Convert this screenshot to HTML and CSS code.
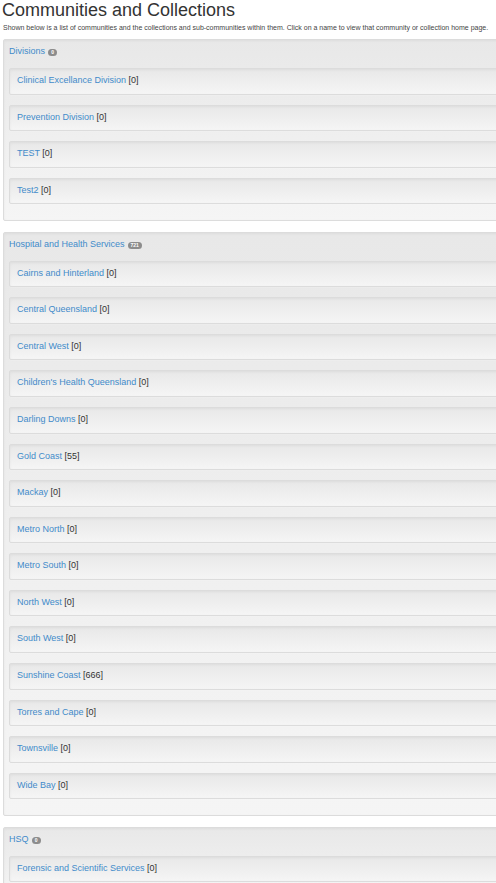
FILE: index.html
```html
<!DOCTYPE html>
<html>
<head>
<meta charset="utf-8">
<title>Communities and Collections</title>
<link rel="stylesheet" href="styles.css">
</head>
<body>
<div class="page">
  <h1 class="title">Communities and Collections</h1>
  <p class="intro">Shown below is a list of communities and the collections and sub-communities within them. Click on a name to view that community or collection home page.</p>

  <div class="well community">
    <div class="community-head"><a href="#">Divisions</a><span class="badge">0</span></div>
    <div class="well item"><a href="#">Clinical Excellance Division</a> [0]</div>
    <div class="well item"><a href="#">Prevention Division</a> [0]</div>
    <div class="well item"><a href="#">TEST</a> [0]</div>
    <div class="well item"><a href="#">Test2</a> [0]</div>
  </div>

  <div class="well community">
    <div class="community-head"><a href="#">Hospital and Health Services</a><span class="badge">721</span></div>
    <div class="well item"><a href="#">Cairns and Hinterland</a> [0]</div>
    <div class="well item"><a href="#">Central Queensland</a> [0]</div>
    <div class="well item"><a href="#">Central West</a> [0]</div>
    <div class="well item"><a href="#">Children's Health Queensland</a> [0]</div>
    <div class="well item"><a href="#">Darling Downs</a> [0]</div>
    <div class="well item"><a href="#">Gold Coast</a> [55]</div>
    <div class="well item"><a href="#">Mackay</a> [0]</div>
    <div class="well item"><a href="#">Metro North</a> [0]</div>
    <div class="well item"><a href="#">Metro South</a> [0]</div>
    <div class="well item"><a href="#">North West</a> [0]</div>
    <div class="well item"><a href="#">South West</a> [0]</div>
    <div class="well item"><a href="#">Sunshine Coast</a> [666]</div>
    <div class="well item"><a href="#">Torres and Cape</a> [0]</div>
    <div class="well item"><a href="#">Townsville</a> [0]</div>
    <div class="well item"><a href="#">Wide Bay</a> [0]</div>
  </div>

  <div class="well community">
    <div class="community-head"><a href="#">HSQ</a><span class="badge">0</span></div>
    <div class="well item"><a href="#">Forensic and Scientific Services</a> [0]</div>
  </div>
</div>
</body>
</html>
```

FILE: styles.css
```css
html {
  overflow: hidden;
}

body {
  margin: 0;
  background: #ffffff;
  color: #333333;
  font-family: "Liberation Sans", Arial, Helvetica, sans-serif;
  font-size: 9px;
  line-height: 13px;
}

.page {
  width: 530px;
}

a {
  color: #428bca;
  text-decoration: none;
}

.title {
  margin: 0;
  padding-left: 2px;
  font-size: 18px;
  line-height: 20px;
  font-weight: normal;
  color: #333333;
}

.intro {
  margin: 3px 0 6px 3px;
  font-size: 7px;
  line-height: 10px;
  color: #444444;
  white-space: nowrap;
}

.well {
  box-sizing: border-box;
  border: 1px solid #dcdcdc;
  border-radius: 2px;
  background-color: #f5f5f5;
  background-image: linear-gradient(to bottom, #e8e8e8 0, #f5f5f5 100%);
  box-shadow: inset 0 1px 3px rgba(0, 0, 0, 0.05), 0 1px 0 rgba(255, 255, 255, 0.1);
}

.community {
  margin: 0 0 10.5px 3px;
  padding: 5px 5px 6px 5px;
}

.community-head {
  margin-bottom: 10px;
  line-height: 13px;
}

.badge {
  display: inline-block;
  margin-left: 3px;
  min-width: 3px;
  padding: 0 3px;
  height: 7px;
  line-height: 7px;
  border-radius: 4px;
  background: #8c8c8c;
  color: #ffffff;
  font-size: 5px;
  font-weight: bold;
  text-align: center;
  vertical-align: 0;
}

.item {
  height: 26.57px;
  margin-bottom: 10px;
  padding: 5px 7px 0 7px;
  line-height: 13px;
  color: #333333;
}
```
